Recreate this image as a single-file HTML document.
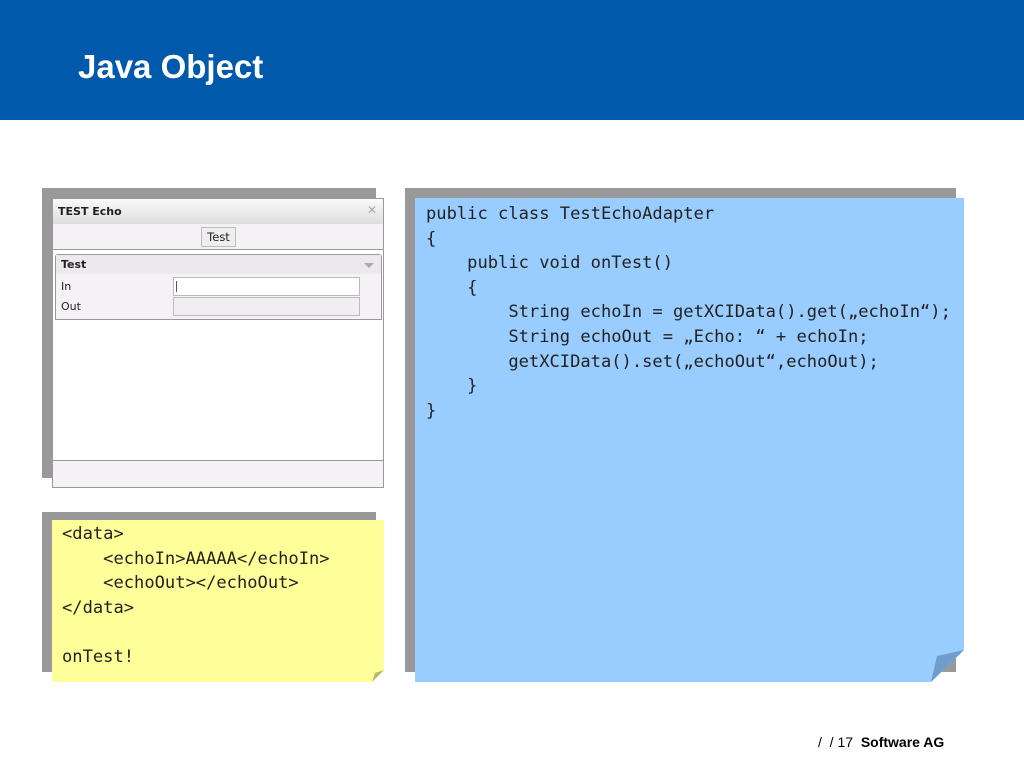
<!DOCTYPE html>
<html><head><meta charset="utf-8"><style>
*{margin:0;padding:0;box-sizing:border-box}
body{width:1024px;height:768px;background:#fff;position:relative;overflow:hidden;font-family:"Liberation Sans",sans-serif}
.hdr{position:absolute;left:0;top:0;width:1024px;height:120px;background:#0059ab}
.hdr h1{position:absolute;left:78px;top:48px;font-family:"Liberation Sans",Arial,sans-serif;font-size:33px;color:#fff;font-weight:bold;line-height:38px}
.sh{position:absolute;background:#999}
.abs{position:absolute}
.code{font-family:"DejaVu Sans Mono","Liberation Mono",monospace;font-size:17.1px;color:#222;line-height:24.6px;white-space:pre}
.dlg{font-family:"DejaVu Sans","Liberation Sans",sans-serif;font-size:11px;color:#222}
</style></head><body>
<div class="hdr"><h1>Java Object</h1></div>

<div class="sh" style="left:42px;top:188px;width:334px;height:290px"></div>
<div class="abs dlg" style="left:52px;top:198px;width:332px;height:290px;background:#fff;border:1px solid #999">
  <div class="abs" style="left:0;top:0;width:330px;height:25px;background:linear-gradient(#fafafa,#ddd);"></div>
  <div class="abs" style="left:5px;top:6px;font-weight:bold">TEST Echo</div>
  <div class="abs" style="left:314px;top:4px;color:#aaa;font-size:12px">✕</div>
  <div class="abs" style="left:0;top:25px;width:330px;height:26px;background:#f4f2f4;border-bottom:1px solid #999"></div>
  <div class="abs" style="left:148px;top:28px;width:35px;height:20px;border:1px solid #bbb;background:#eee;text-align:center;line-height:18px;font-size:11.5px">Test</div>
  <div class="abs" style="left:2px;top:55px;width:327px;height:66px;border:1px solid #999;border-radius:3px 3px 0 0;background:#f4f2f4">
    <div class="abs" style="left:0;top:0;width:325px;height:19px;background:#ebe9eb"></div>
    <div class="abs" style="left:5px;top:3px;font-weight:bold">Test</div>
    <div class="abs" style="left:308px;top:8px;width:0;height:0;border-left:5px solid transparent;border-right:5px solid transparent;border-top:5px solid #aaa"></div>
    <div class="abs" style="left:5px;top:25px">In</div>
    <div class="abs" style="left:5px;top:45px">Out</div>
    <div class="abs" style="left:117px;top:22px;width:187px;height:19px;border:1px solid #bbb;background:#fff"><div class="abs" style="left:2px;top:3px;width:1px;height:11px;background:#555"></div></div>
    <div class="abs" style="left:117px;top:42px;width:187px;height:19px;border:1px solid #bbb;background:#f0eef0"></div>
  </div>
  <div class="abs" style="left:0;top:261px;width:330px;height:27px;background:#f4f2f4;border-top:1px solid #999"></div>
</div>

<div class="sh" style="left:42px;top:512px;width:334px;height:160px"></div>
<svg class="abs" style="left:52px;top:520px" width="332" height="162"><polygon points="0,0 332,0 332,150 320,162 0,162" fill="#ffff99"/><polygon points="320,162 323,153 332,150" fill="#b8b86e"/></svg>
<div class="abs code" style="left:62px;top:522px">&lt;data&gt;
    &lt;echoIn&gt;AAAAA&lt;/echoIn&gt;
    &lt;echoOut&gt;&lt;/echoOut&gt;
&lt;/data&gt;

onTest!</div>

<div class="sh" style="left:405px;top:188px;width:551px;height:484px"></div>
<svg class="abs" style="left:415px;top:198px" width="550" height="484"><polygon points="0,0 549,0 549,452 516,484 0,484" fill="#99ccff"/><polygon points="516,484 522,458 549,452" fill="#6f9dcc"/></svg>
<div class="abs code" style="left:426px;top:202px">public class TestEchoAdapter
{
    public void onTest()
    {
        String echoIn = getXCIData().get(„echoIn“);
        String echoOut = „Echo: “ + echoIn;
        getXCIData().set(„echoOut“,echoOut);
    }
}</div>

<div class="abs" style="left:818px;top:734px;font-size:14px;color:#000">/ &nbsp;/ 17 &nbsp;<b>Software AG</b></div>
</body></html>
